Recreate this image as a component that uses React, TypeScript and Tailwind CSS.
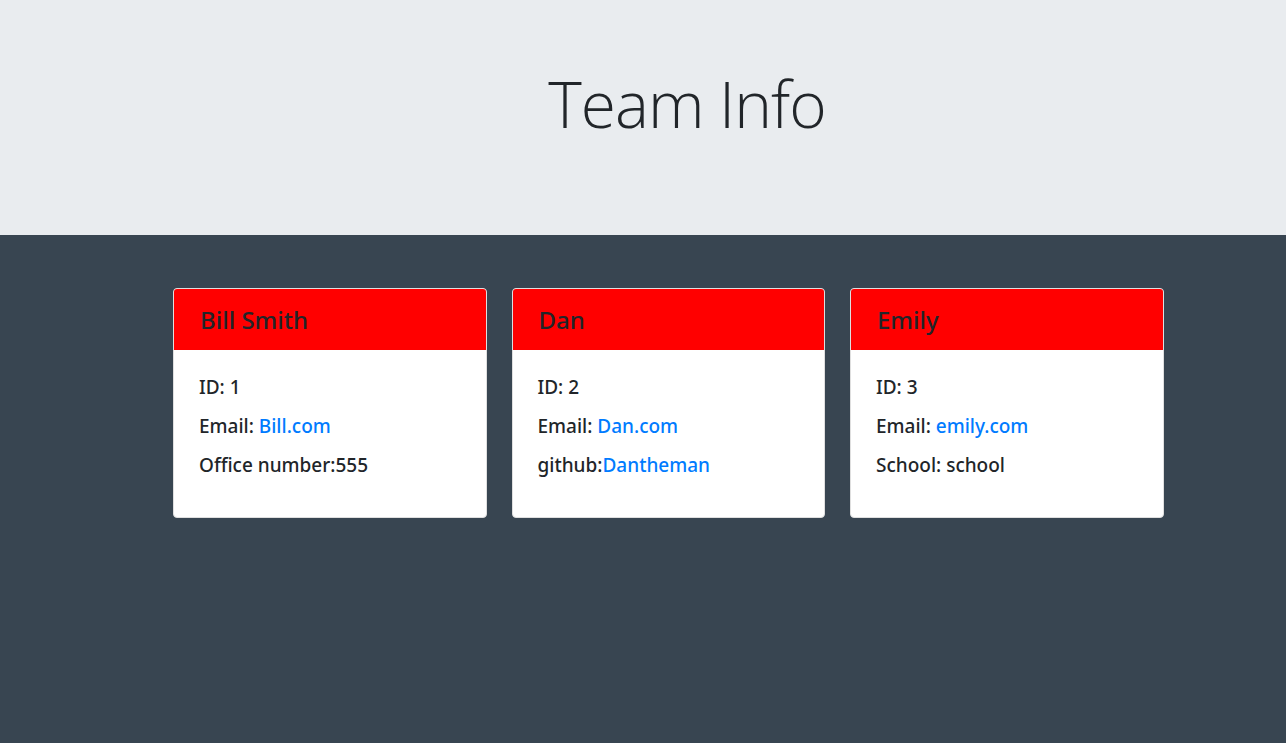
const members = [
  { name: 'Bill Smith', id: 1, email: 'Bill.com', extra: <>Office number:555</> },
  { name: 'Dan', id: 2, email: 'Dan.com', extra: <>github:<a href="#" className="text-[#007bff]">Dantheman</a></> },
  { name: 'Emily', id: 3, email: 'emily.com', extra: <>School: school</> },
]

export default function App() {
  return (
    <div className="min-h-[743px] bg-[#384551] font-['Open_Sans',sans-serif] text-[#212529]">
      {/* header */}
      <div className="flex h-[235px] items-center justify-center bg-[#e9ecef] pb-[28px] pl-[88px]">
        <h1 className="text-[64px] font-light leading-none tracking-[-1px] text-[#212529]">Team Info</h1>
      </div>

      {/* cards */}
      <div className="flex gap-[25px] pl-[173px] pt-[53px]">
        {members.map((m) => (
          <div key={m.id} className="w-[313.5px] overflow-hidden rounded-[4px] border border-[#dfdfdf] bg-white font-['Noto_Sans',sans-serif]">
            <div className="flex h-[61px] items-center bg-[#ff0000] px-[26px]">
              <h3 className="text-[24px] font-medium text-[#212529]">{m.name}</h3>
            </div>
            <div className="flex h-[167px] flex-col gap-[14px] px-[25px] pt-[25px] text-[19px] font-medium leading-[25px]">
              <p>ID: {m.id}</p>
              <p>Email: <a href="#" className="text-[#007bff]">{m.email}</a></p>
              <p>{m.extra}</p>
            </div>
          </div>
        ))}
      </div>
    </div>
  )
}
